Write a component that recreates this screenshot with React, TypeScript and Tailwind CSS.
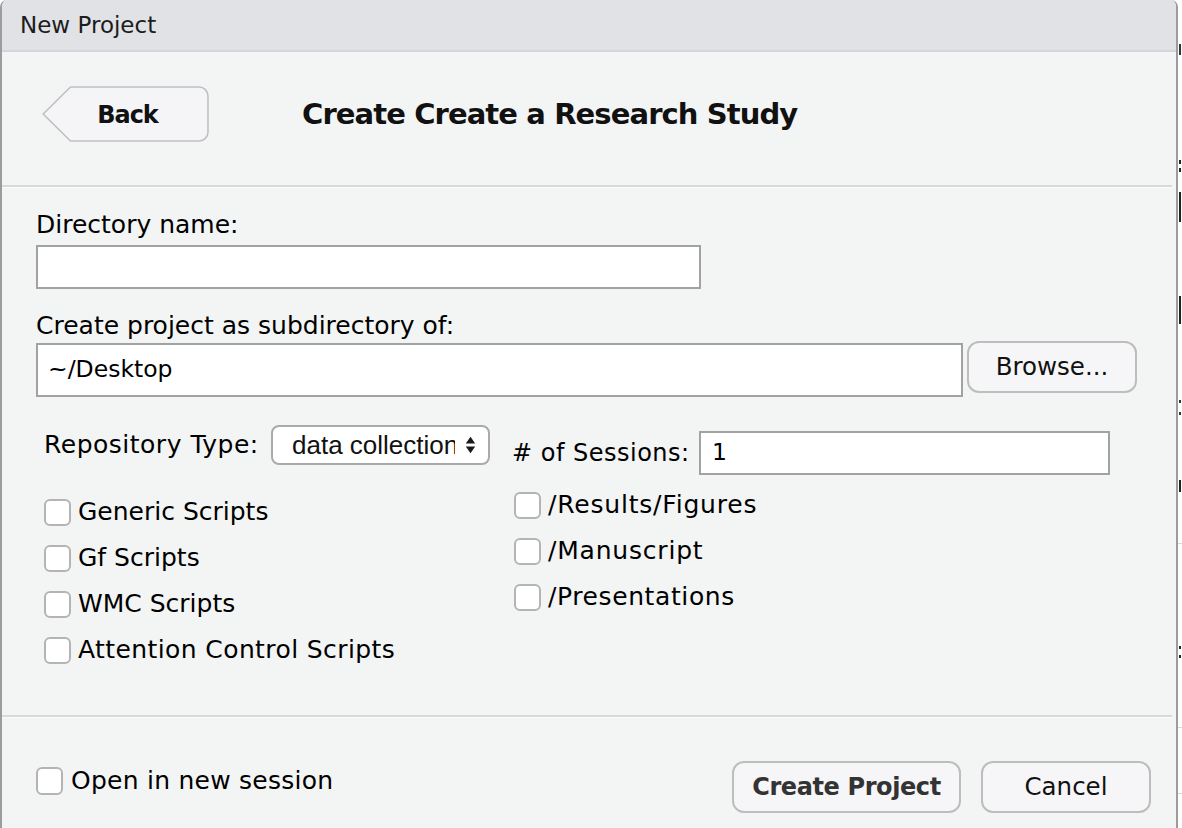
import React from "react";

function Check({ className = "" }: { className?: string }) {
  return (
    <span
      className={
        "block w-[27px] h-[27px] shrink-0 rounded-[6px] border-2 border-[#b4b4b4] bg-white " +
        className
      }
    />
  );
}

function CheckRow({ label, track = "" }: { label: string; track?: string }) {
  return (
    <div className="h-[46px] flex items-center gap-[7px]">
      <Check />
      <span className={"text-[25px] leading-[30px] whitespace-nowrap " + track}>{label}</span>
    </div>
  );
}

function BackButton() {
  return (
    <div className="relative w-[167px] h-[56px] shrink-0">
      <svg className="absolute inset-0" width="167" height="56" viewBox="0 0 167 56">
        <path
          d="M28.5 1 H157 A9 9 0 0 1 166 10 V46 A9 9 0 0 1 157 55 H28.5 L1.2 28 Z"
          fill="#f5f5f7"
          stroke="#c0c0c2"
          strokeWidth="1.6"
        />
      </svg>
      <div className="absolute inset-0 flex items-center justify-center pl-[4px] pt-[1px] font-bold text-[24px] tracking-[-1px] text-[#111]">
        Back
      </div>
    </div>
  );
}

export default function App() {
  return (
    <div className="w-[1182px] h-[828px] bg-white flex overflow-hidden text-black font-['DejaVu_Sans','Liberation_Sans',sans-serif]">
      <div className="w-[1178px] h-full shrink-0 flex flex-col border-x-2 border-[#9c9c9c] rounded-t-[7px] overflow-hidden bg-[#f3f4f4]">
        {/* Title bar */}
        <div className="h-[52px] shrink-0 bg-[#e1e2e6] border-b-2 border-[#d4d5d8] flex items-center pl-[18px] text-[23px] text-[#1c1c1c]">
          New Project
        </div>

        {/* Header */}
        <div className="h-[133px] shrink-0 flex items-start pt-[34px] pl-[40px]">
          <BackButton />
          <div className="ml-[93px] h-[55px] pt-[3px] flex items-center font-bold text-[29px] tracking-[-0.9px] text-[#111]">
            Create Create a Research Study
          </div>
        </div>
        <div className="h-[3px] shrink-0 mr-[4px] border-t-2 border-[#d8d9d9] bg-[#fbfbfb]" />

        {/* Form */}
        <div className="h-[527px] shrink-0 flex flex-col pt-[22px] pl-[34px]">
          <div className="h-[30px] leading-[30px] text-[25px]">Directory name:</div>
          <div className="mt-[5px] w-[665px] h-[44px] border-2 border-[#a2a2a2] bg-white" />
          <div className="mt-[22px] h-[30px] leading-[30px] text-[25px]">
            Create project as subdirectory of:
          </div>
          <div className="flex items-start">
            <div className="mt-[2px] w-[927px] h-[54px] border-2 border-[#a2a2a2] bg-white flex items-center pl-[10px] text-[23.5px]">
              ~/Desktop
            </div>
            <div className="ml-[4px] w-[170px] h-[52px] rounded-[12px] border-2 border-[#bdbdbd] bg-[#f6f6f8] flex items-center justify-center text-[24.5px] text-[#111]">
              Browse...
            </div>
          </div>

          <div className="mt-[28px] flex items-start">
            {/* Left column */}
            <div className="ml-[8px] w-[468px] flex flex-col">
              <div className="h-[40px] flex items-center">
                <span className="w-[227px] text-[25px] leading-[30px] tracking-[0.5px] whitespace-nowrap">
                  Repository Type:
                </span>
                <div className="w-[219px] h-[40px] rounded-[8px] border-2 border-[#aaaaaa] bg-white flex items-center pl-[19px]">
                  <span className="w-[163px] h-[30px] overflow-hidden whitespace-nowrap text-[26px] leading-[30px] font-['Liberation_Sans',Arial,sans-serif] text-[#111]">
                    data collection
                  </span>
                  <svg className="ml-[10px]" width="11" height="18" viewBox="0 0 11 18">
                    <path d="M0.8 7.4 L5.5 0.8 L10.2 7.4 Z" fill="#1a1a1a" />
                    <path d="M0.8 10.4 L10.2 10.4 L5.5 17.2 Z" fill="#1a1a1a" />
                  </svg>
                </div>
              </div>
              <div className="mt-[24px] flex flex-col">
                <CheckRow label="Generic Scripts" />
                <CheckRow label="Gf Scripts" />
                <CheckRow label="WMC Scripts" />
                <CheckRow label="Attention Control Scripts" track="tracking-[0.4px]" />
              </div>
            </div>

            {/* Right column */}
            <div className="pt-[6px] flex flex-col">
              <div className="h-[44px] flex items-center">
                <span className="w-[187px] text-[24px] leading-[30px] tracking-[0.5px] whitespace-nowrap">
                  # of Sessions:
                </span>
                <div className="w-[411px] h-[44px] border-2 border-[#a2a2a2] bg-white flex items-center pl-[11px] text-[23.5px]">
                  1
                </div>
              </div>
              <div className="mt-[7px] ml-[2px] flex flex-col">
                <CheckRow label="/Results/Figures" track="tracking-[0.8px]" />
                <CheckRow label="/Manuscript" track="tracking-[0.8px]" />
                <CheckRow label="/Presentations" track="tracking-[0.6px]" />
              </div>
            </div>
          </div>
        </div>

        <div className="h-[3px] shrink-0 mr-[4px] border-t-2 border-[#d8d9d9] bg-[#fbfbfb]" />

        {/* Footer */}
        <div className="flex items-start pt-[43px] pl-[34px] pr-[25px]">
          <div className="mt-[6px] h-[28px] flex items-center gap-[8px]">
            <Check className="h-[28px]" />
            <span className="text-[25px] leading-[30px] tracking-[0.25px] whitespace-nowrap">
              Open in new session
            </span>
          </div>
          <div className="ml-auto flex gap-[20px]">
            <div className="w-[229px] h-[52px] rounded-[12px] border-2 border-[#bdbdbd] bg-[#f6f6f8] flex items-center justify-center font-bold text-[24px] tracking-[-0.4px] text-[#333]">
              Create Project
            </div>
            <div className="w-[170px] h-[52px] rounded-[12px] border-2 border-[#bdbdbd] bg-[#f6f6f8] flex items-center justify-center text-[24.5px] text-[#111]">
              Cancel
            </div>
          </div>
        </div>
      </div>

      {/* Background sliver to the right of the dialog */}
      <div className="relative flex-1 h-full bg-white">
        <span className="absolute left-[1px] top-[44px] w-[2px] h-[11px] bg-[#333]" />
        <span className="absolute left-[1px] top-[160px] w-[2px] h-[4px] bg-[#222]" />
        <span className="absolute left-[1px] top-[168px] w-[2px] h-[4px] bg-[#222]" />
        <span className="absolute left-[1px] top-[192px] w-[2px] h-[30px] bg-[#222]" />
        <span className="absolute left-[1px] top-[296px] w-[2px] h-[28px] bg-[#222]" />
        <span className="absolute left-[1px] top-[400px] w-[2px] h-[3px] bg-[#333]" />
        <span className="absolute left-[1px] top-[412px] w-[2px] h-[3px] bg-[#333]" />
        <span className="absolute left-[1px] top-[480px] w-[2px] h-[12px] bg-[#222]" />
        <span className="absolute left-[0px] top-[543px] w-[4px] h-[1px] bg-[#d8d8d8]" />
        <span className="absolute left-[1px] top-[646px] w-[2px] h-[3px] bg-[#222]" />
        <span className="absolute left-[1px] top-[655px] w-[2px] h-[3px] bg-[#222]" />
        <span className="absolute left-[0px] top-[727px] w-[4px] h-[1px] bg-[#d8d8d8]" />
        <span className="absolute left-[0px] top-[793px] w-[4px] h-[1px] bg-[#d8d8d8]" />
      </div>
    </div>
  );
}
